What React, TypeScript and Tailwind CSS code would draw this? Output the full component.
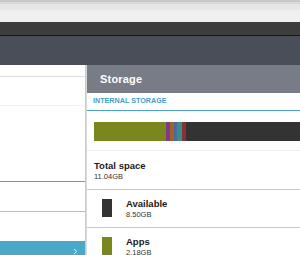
import { ChevronRight } from 'lucide-react';

const segments = [
  { color: 'bg-[#7a861e]', width: 'w-[72px]' },
  { color: 'bg-[#7c3d86]', width: 'w-[4px]' },
  { color: 'bg-[#a1622b]', width: 'w-[4px]' },
  { color: 'bg-[#4b6aa1]', width: 'w-[3px]' },
  { color: 'bg-[#3b8d8c]', width: 'w-[5px]' },
  { color: 'bg-[#8a3131]', width: 'w-[4px]' },
];

function StorageRow({ label, size, swatch }: { label: string; size: string; swatch: string }) {
  return (
    <div className="flex shrink-0 h-[38px] border-b border-[#c9c9c9] pl-[15px] pt-[9px]">
      <div className={`w-[10px] h-[18px] shrink-0 ${swatch}`} />
      <div className="ml-[14px] -mt-[1px] flex flex-col">
        <span className="text-[9.5px] leading-[12px] font-bold text-[#1a1a1a]">{label}</span>
        <span className="text-[7.5px] leading-[10px] text-[#333]">{size}</span>
      </div>
    </div>
  );
}

export default function App() {
  return (
    <div className="w-[300px] h-[255px] overflow-hidden flex flex-col bg-white font-['Liberation_Sans',Arial,sans-serif]">
      {/* window chrome */}
      <div className="h-[22px] shrink-0 flex flex-col">
        <div className="h-[2px] bg-[#c8c8c8]" />
        <div className="h-[2px] bg-[#d9d9d9]" />
        <div className="h-[6px] bg-[#e6e6e6]" />
        <div className="flex-1 bg-[#efefef]" />
      </div>
      <div className="h-[13px] shrink-0 bg-[#3d3d3d]" />
      <div className="h-px shrink-0 bg-[#161616]" />
      <div className="h-[29px] shrink-0 bg-[#494e58]" />

      <div className="flex flex-1 min-h-0">
        {/* left list */}
        <div className="w-[85px] flex flex-col bg-white">
          <div className="h-[12px] shrink-0 border-b border-[#dcdcdc]" />
          <div className="h-[29px] shrink-0 border-b border-[#f2f2f2]" />
          <div className="h-[76px] shrink-0 border-b border-[#4aa8c8]" />
          <div className="h-[30px] shrink-0 border-b border-[#bdbdbd]" />
          <div className="h-[29px] shrink-0" />
          <div className="flex-1 bg-[#4aa8c8] flex justify-end items-start pr-[5px] pt-[6px]">
            <ChevronRight className="w-[9px] h-[9px] text-white" strokeWidth={2.5} />
          </div>
        </div>
        <div className="w-[2px] bg-gradient-to-r from-[#c2c2c2] to-[#e2e2e2]" />

        {/* storage pane */}
        <div className="flex-1 flex flex-col bg-white">
          <div className="h-[28px] shrink-0 bg-[#777c86] flex items-center pl-[13px]">
            <span className="text-[11px] font-bold text-white tracking-[0.2px]">Storage</span>
          </div>
          <div className="h-[18px] shrink-0 border-b border-[#4aa3c6] flex items-center pl-[6px]">
            <span className="text-[7.2px] font-bold text-[#3f9fc4]">INTERNAL STORAGE</span>
          </div>
          <div className="h-[40px] shrink-0 border-b border-[#efefef] pl-[7px] pt-[11px]">
            <div className="flex h-[19px] bg-[#333333]">
              {segments.map((s, i) => (
                <div key={i} className={`${s.color} ${s.width} h-full`} />
              ))}
            </div>
          </div>
          <div className="h-[39px] shrink-0 border-b border-[#c9c9c9] pl-[7px] pt-[9px] flex flex-col">
            <span className="text-[9.5px] leading-[12px] font-bold text-[#1a1a1a]">Total space</span>
            <span className="text-[7.5px] leading-[10px] text-[#333]">11.04GB</span>
          </div>
          <StorageRow label="Available" size="8.50GB" swatch="bg-[#333333]" />
          <StorageRow label="Apps" size="2.18GB" swatch="bg-[#7a861e]" />
        </div>
      </div>
    </div>
  );
}
